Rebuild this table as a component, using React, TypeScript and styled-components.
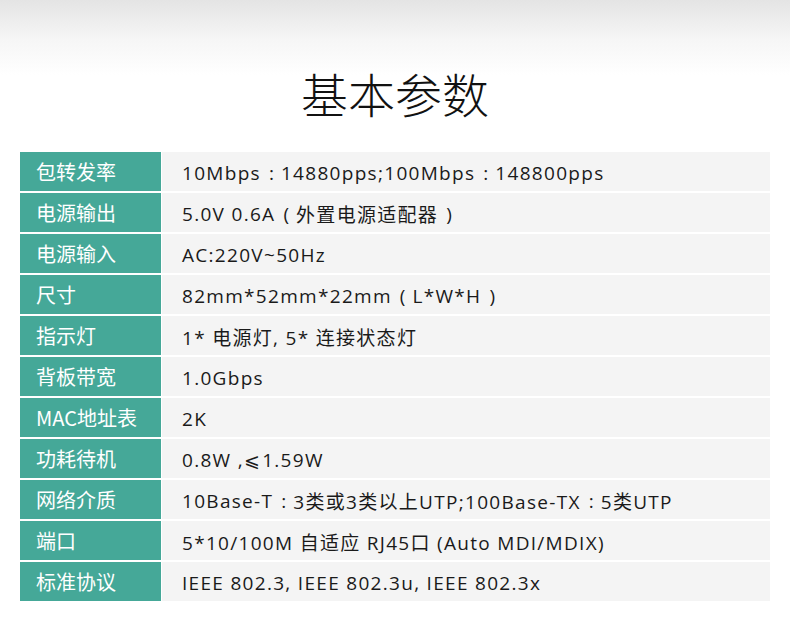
import React from "react";
import styled, { createGlobalStyle } from "styled-components";

const Global = createGlobalStyle`
  html, body { margin: 0; padding: 0; background: #ffffff; }
  body { font-family: "Open Sans", "Noto Sans CJK SC", sans-serif; }
`;

const Page = styled.div`
  width: 790px;
  height: 621px;
  background: #ffffff;
  overflow: hidden;
`;

const Header = styled.header`
  height: 152px;
  background: linear-gradient(to bottom, #e4e4e4 0px, #f6f6f6 40px, #ffffff 75px, #ffffff 100%);
  display: flex;
  justify-content: center;
  align-items: flex-start;
`;

const Title = styled.h1`
  margin: 61px 0 0;
  font-family: "Noto Sans CJK SC", sans-serif;
  font-weight: 300;
  font-size: 47px;
  line-height: 64px;
  color: #111111;
`;

const Table = styled.div`
  margin: 0 20px;
  display: grid;
  grid-template-columns: 141px 1fr;
  column-gap: 1px;
  row-gap: 2px;
`;

const Label = styled.div`
  height: 39px;
  background: #45a898;
  color: #ffffff;
  font-family: "Noto Sans CJK SC", sans-serif;
  font-size: 20px;
  display: flex;
  align-items: center;
  padding-left: 16px;
`;

const Value = styled.div`
  height: 39px;
  background: #f4f4f4;
  color: #1a1a1a;
  font-family: "Open Sans", "Noto Sans CJK SC", sans-serif;
  font-size: 19px;
  letter-spacing: 1.3px;
  display: flex;
  align-items: center;
  padding: 2px 0 0 20px;
  box-sizing: border-box;
  white-space: pre;
`;

const Punct = styled.span`
  display: inline-block;
  margin: 0 7px 0 8px;
  letter-spacing: 0;
`;

const Math = styled.span`
  font-family: "DejaVu Sans", "Noto Sans CJK SC", sans-serif;
  font-size: 19px;
  margin-right: 1px;
`;

const rows: [string, string][] = [
  ["包转发率", "10Mbps：14880pps;100Mbps：148800pps"],
  ["电源输出", "5.0V 0.6A（外置电源适配器）"],
  ["电源输入", "AC:220V~50Hz"],
  ["尺寸", "82mm*52mm*22mm（L*W*H）"],
  ["指示灯", "1* 电源灯, 5* 连接状态灯"],
  ["背板带宽", "1.0Gbps"],
  ["MAC地址表", "2K"],
  ["功耗待机", "0.8W ,⩽1.59W"],
  ["网络介质", "10Base-T：3类或3类以上UTP;100Base-TX：5类UTP"],
  ["端口", "5*10/100M 自适应 RJ45口 (Auto MDI/MDIX)"],
  ["标准协议", "IEEE 802.3, IEEE 802.3u, IEEE 802.3x"],
];

const map: Record<string, string> = { "：": ":", "（": "(", "）": ")" };

function renderValue(v: string) {
  const parts = v.split(/([：（）⩽])/);
  return parts.map((p, i) => {
    if (map[p]) return <Punct key={i}>{map[p]}</Punct>;
    if (p === "⩽") return <Math key={i}>{p}</Math>;
    return <React.Fragment key={i}>{p}</React.Fragment>;
  });
}

export default function App() {
  return (
    <Page>
      <Global />
      <Header>
        <Title>基本参数</Title>
      </Header>
      <Table>
        {rows.map(([k, v]) => (
          <React.Fragment key={k}>
            <Label>{k}</Label>
            <Value>{renderValue(v)}</Value>
          </React.Fragment>
        ))}
      </Table>
    </Page>
  );
}
